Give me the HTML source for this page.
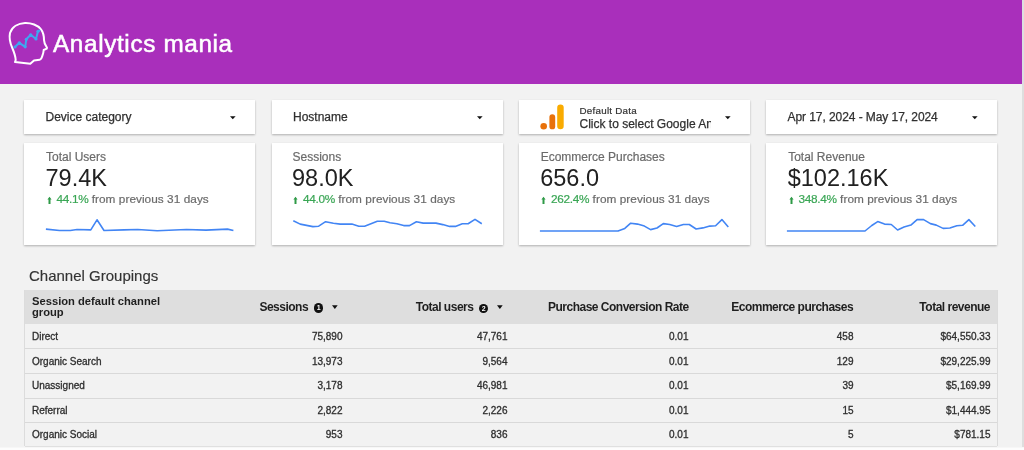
<!DOCTYPE html>
<html><head><meta charset="utf-8">
<style>
*{margin:0;padding:0;box-sizing:border-box}
html,body{width:1024px;height:450px;overflow:hidden;background:#f2f2f2;font-family:"Liberation Sans",sans-serif}
.abs{position:absolute}
#hdr{left:0;top:0;width:1022px;height:84px;background:#a92fbb}
#rbar{left:1022px;top:0;width:2px;height:450px;background:#dedede}
.card{position:absolute;background:#fff;box-shadow:0 1px 2px rgba(0,0,0,.28)}
.dd{top:100px;height:34px}
.sc{top:143px;height:102px}
.t{position:absolute;white-space:nowrap}
.arrow{position:absolute;width:0;height:0;border-left:3.5px solid transparent;border-right:3.5px solid transparent;border-top:4px solid #111}
.dd .arrow{border-left-width:2.8px;border-right-width:2.8px;border-top-width:3.2px}
.ddtxt{font-size:12px;color:#303030;top:10px;-webkit-text-stroke:0.25px #303030}
.sct{font-size:12px;color:#6b6b6b;top:7px;-webkit-text-stroke:0.2px #6b6b6b}
.scv{font-size:23.5px;color:#212121;top:21.5px;margin-left:-0.5px}
.scd{font-size:11.8px;color:#6b6b6b;top:49.3px;letter-spacing:0.05px;-webkit-text-stroke:0.2px #6b6b6b}
.scd b{font-weight:normal;color:#3aa655;letter-spacing:-0.3px;-webkit-text-stroke:0.2px #3aa655}
.spark{position:absolute;left:0;top:0}
#title{left:29px;top:267px;font-size:15px;color:#333;-webkit-text-stroke:0.15px #333}
#tbl{left:24.5px;top:290px;width:972px;height:156px;background:#f2f2f2;box-shadow:-1px 0 0 #dcdcdc,1px 0 0 #dcdcdc,0 1px 0 #e0e0e0}
#bstrip{left:0;top:447px;width:1024px;height:3px;background:#fdfdfd;border-top:1px solid #f7f7f7}
#thead{position:absolute;left:0;top:0;width:972px;height:34px;background:#dedede}
.th{position:absolute;font-weight:bold;font-size:12px;letter-spacing:-0.5px;color:#1f1f1f;white-space:nowrap}
.row{position:absolute;left:0;width:972px;height:24.6px}
.hl{position:absolute;left:0;width:972px;height:1px;background:#d9d9d9}
.td{position:absolute;font-size:10px;color:#2e2e2e;white-space:nowrap;top:7px;-webkit-text-stroke:0.3px #2e2e2e}
.circ{position:absolute;width:9.2px;height:9.4px;border-radius:50%;background:#111;color:#fff;font-size:7px;font-weight:bold;text-align:center;line-height:9.4px}
</style></head><body><div style="position:absolute;left:0;top:0;width:1024px;height:450px;will-change:transform">
<div id="hdr" class="abs">
  <svg class="abs" style="left:0;top:0" width="60" height="85" viewBox="0 0 60 85">
    <path d="M25 23 C31 22.8 38 25 41 29.3 C43.5 32.5 44 36 44 40 C44 42.5 45.5 45.5 47 47.7 L46.7 48.7 L43.7 50 C43.5 52.5 43 54.5 42.3 56 C41.5 58.5 40.5 59.7 39.7 59.7 L34 60.5 L30.3 63.7 L15 62 L15.7 60 C15.5 56 14 52 12.3 48 C10 43 9 38 10 33 C12 27 18 23.3 25 23 Z" fill="none" stroke="#fff" stroke-width="2" stroke-linejoin="round"/>
    <polyline points="15,47 19.3,42.8 25.2,46.8 26.3,39.3 30.7,34.8 36,39 38,31.3 39.5,30.5" fill="none" stroke="#3ea8f0" stroke-width="2" stroke-linejoin="round" stroke-linecap="round"/><circle cx="15" cy="47" r="1.6" fill="#3ea8f0"/><circle cx="19.3" cy="42.8" r="1.6" fill="#3ea8f0"/><circle cx="25.2" cy="46.8" r="1.6" fill="#3ea8f0"/><circle cx="26.3" cy="39.3" r="1.6" fill="#3ea8f0"/><circle cx="30.7" cy="34.8" r="1.6" fill="#3ea8f0"/><circle cx="36" cy="39" r="1.6" fill="#3ea8f0"/><circle cx="38" cy="31.3" r="1.6" fill="#3ea8f0"/>
  </svg>
  <div class="t" id="logo" style="left:52.5px;top:31px;font-size:23px;color:#fff;-webkit-text-stroke:0.5px #fff;letter-spacing:0.6px;transform:scaleX(1.057);transform-origin:0 0">Analytics mania</div>
</div>
<div id="rbar" class="abs"></div>

<!-- dropdowns -->
<div class="card dd" style="left:24px;width:231px">
  <div class="t ddtxt" style="left:21.5px">Device category</div>
  <svg class="abs" style="left:205.8px;top:16.2px" width="6" height="4" viewBox="0 0 6 4"><polygon points="0,0.3 5.6,0.3 2.8,3.2" fill="#111"/></svg>
</div>
<div class="card dd" style="left:271.5px;width:231px">
  <div class="t ddtxt" style="left:21.5px">Hostname</div>
  <svg class="abs" style="left:205.8px;top:16.2px" width="6" height="4" viewBox="0 0 6 4"><polygon points="0,0.3 5.6,0.3 2.8,3.2" fill="#111"/></svg>
</div>
<div class="card dd" style="left:519px;width:231px">
  <svg class="abs" style="left:0;top:0" width="50" height="34">
    <circle cx="24.7" cy="26.3" r="3.3" fill="#e8710a"/>
    <rect x="30.4" y="14.2" width="5.8" height="15.1" rx="2.9" fill="#e8710a"/>
    <rect x="38.2" y="4.4" width="6.5" height="24.9" rx="3.25" fill="#f9ab00"/>
  </svg>
  <div class="t" style="left:60.5px;top:4.6px;font-size:9.8px;letter-spacing:0.25px;color:#333;-webkit-text-stroke:0.2px #333">Default Data</div>
  <div class="t" style="left:60.5px;top:16.6px;font-size:12px;color:#303030;width:131px;overflow:hidden;-webkit-text-stroke:0.25px #303030">Click to select Google Analytics</div>
  <svg class="abs" style="left:205.5px;top:16.2px" width="6" height="4" viewBox="0 0 6 4"><polygon points="0,0.3 5.6,0.3 2.8,3.2" fill="#111"/></svg>
</div>
<div class="card dd" style="left:766px;width:231px">
  <div class="t ddtxt" style="left:21.5px;letter-spacing:-0.07px">Apr 17, 2024 - May 17, 2024</div>
  <svg class="abs" style="left:205.5px;top:16.2px" width="6" height="4" viewBox="0 0 6 4"><polygon points="0,0.3 5.6,0.3 2.8,3.2" fill="#111"/></svg>
</div>

<!-- scorecards -->
<div class="card sc" style="left:24px;width:231px">
  <div class="t sct" style="left:22px">Total Users</div>
  <div class="t scv" style="left:22px">79.4K</div>
  <div class="t scd" style="left:22px"><b><svg width="5" height="8" viewBox="0 0 5 8" style="display:inline-block;vertical-align:-0.8px;margin-right:4.9px;margin-left:0.5px"><path d="M2.5 0.8 L4.6 3.4 L3.5 3.4 L3.5 8 L1.5 8 L1.5 3.4 L0.4 3.4 Z" fill="#2e9a47"/></svg>44.1%</b> from previous 31 days</div>
  <svg class="spark" width="231" height="102" viewBox="24 143 231 102"><polyline fill="none" stroke="#4285f4" stroke-width="1.6" stroke-linejoin="round" points="45.9,229.1 59.5,230.5 70.3,230.5 77.1,229.5 90.8,229.9 97,219.8 104,230.5 124,229.9 137.7,229.5 157.2,230.7 186.5,229.5 206,230.1 227.5,229.1 233.4,230.5"/></svg>
</div>
<div class="card sc" style="left:271.5px;width:231px">
  <div class="t sct" style="left:21px">Sessions</div>
  <div class="t scv" style="left:21px">98.0K</div>
  <div class="t scd" style="left:21px"><b><svg width="5" height="8" viewBox="0 0 5 8" style="display:inline-block;vertical-align:-0.8px;margin-right:4.9px;margin-left:0.5px"><path d="M2.5 0.8 L4.6 3.4 L3.5 3.4 L3.5 8 L1.5 8 L1.5 3.4 L0.4 3.4 Z" fill="#2e9a47"/></svg>44.0%</b> from previous 31 days</div>
  <svg class="spark" width="231" height="102" viewBox="271.5 143 231 102"><polyline fill="none" stroke="#4285f4" stroke-width="1.6" stroke-linejoin="round" points="292.8,220.7 299.7,224.1 312.4,226.6 318.2,226.2 325.1,221.7 332.9,223.3 339.7,224.1 351.4,224.1 358.3,226.2 364.1,226.2 376.8,221.3 383.7,221.3 389.5,222.7 396.4,223.7 403.2,225.6 409,225.6 415.9,221.7 422.7,223.1 435.4,223.1 442.3,224.6 449.1,226.4 454.9,226.4 461.8,223.7 467.6,223.7 474.5,219.4 481.3,223.7"/></svg>
</div>
<div class="card sc" style="left:519px;width:231px">
  <div class="t sct" style="left:21.7px">Ecommerce Purchases</div>
  <div class="t scv" style="left:21.7px">656.0</div>
  <div class="t scd" style="left:21.7px"><b><svg width="5" height="8" viewBox="0 0 5 8" style="display:inline-block;vertical-align:-0.8px;margin-right:4.9px;margin-left:0.5px"><path d="M2.5 0.8 L4.6 3.4 L3.5 3.4 L3.5 8 L1.5 8 L1.5 3.4 L0.4 3.4 Z" fill="#2e9a47"/></svg>262.4%</b> from previous 31 days</div>
  <svg class="spark" width="231" height="102" viewBox="519 143 231 102"><polyline fill="none" stroke="#4285f4" stroke-width="1.6" stroke-linejoin="round" points="539.9,231 618,231 624.8,228.4 630.7,223.2 637.5,224.1 644.4,226.1 650.6,229.6 657,228 663.3,223.6 669.7,224.5 676.6,226.5 683.4,224.5 689.3,224.5 696.1,229 702.9,227.9 709.8,226.1 715.6,225.7 721.9,219.6 728.3,227.1"/></svg>
</div>
<div class="card sc" style="left:766px;width:231px">
  <div class="t sct" style="left:22.2px">Total Revenue</div>
  <div class="t scv" style="left:22.2px">$102.16K</div>
  <div class="t scd" style="left:22.2px"><b><svg width="5" height="8" viewBox="0 0 5 8" style="display:inline-block;vertical-align:-0.8px;margin-right:4.9px;margin-left:0.5px"><path d="M2.5 0.8 L4.6 3.4 L3.5 3.4 L3.5 8 L1.5 8 L1.5 3.4 L0.4 3.4 Z" fill="#2e9a47"/></svg>348.4%</b> from previous 31 days</div>
  <svg class="spark" width="231" height="102" viewBox="766 143 231 102"><polyline fill="none" stroke="#4285f4" stroke-width="1.6" stroke-linejoin="round" points="786.9,231 865,231 871.8,225.5 877.7,221.6 884.5,224.1 891.3,224.5 897.6,230 904,227.1 910.9,225.1 917.1,219.6 923.6,219.6 930.4,223.6 936.3,225.1 943.1,228.4 949.9,228 956.8,225.7 962.6,225.3 968.9,219.6 975.3,226.5"/></svg>
</div>

<div class="t" id="title">Channel Groupings</div>

<div id="tbl" class="abs">
  <div id="thead">
    <div class="th" style="left:7.5px;top:6px;line-height:11px;font-size:11.2px;letter-spacing:0">Session default channel<br>group</div>
    <div class="th" style="right:688.4px;top:9.6px">Sessions</div>
    <div class="circ" style="left:289.5px;top:13.2px">1</div>
    <svg class="abs" style="left:307.4px;top:14.6px" width="6" height="4.5" viewBox="0 0 6 4.5"><polygon points="0,0.2 5.7,0.2 2.85,3.9" fill="#111"/></svg>
    <div class="th" style="right:523.1px;top:9.6px">Total users</div>
    <div class="circ" style="left:454.6px;top:13.5px">2</div>
    <svg class="abs" style="left:472.7px;top:14.6px" width="6" height="4.5" viewBox="0 0 6 4.5"><polygon points="0,0.2 5.7,0.2 2.85,3.9" fill="#111"/></svg>
    <div class="th" style="right:307.8px;top:9.6px">Purchase Conversion Rate</div>
    <div class="th" style="right:143.4px;top:9.6px">Ecommerce purchases</div>
    <div class="th" style="right:6.5px;top:9.6px">Total revenue</div>
  </div>
  <div class="row" style="top:34.0px;">
    <div class="td" style="left:7.5px">Direct</div>
    <div class="td" style="right:654px">75,890</div>
    <div class="td" style="right:489px">47,761</div>
    <div class="td" style="right:308px">0.01</div>
    <div class="td" style="right:143px">458</div>
    <div class="td" style="right:6px">$64,550.33</div>
  </div>
  <div class="row" style="top:58.6px;">
    <div class="td" style="left:7.5px">Organic Search</div>
    <div class="td" style="right:654px">13,973</div>
    <div class="td" style="right:489px">9,564</div>
    <div class="td" style="right:308px">0.01</div>
    <div class="td" style="right:143px">129</div>
    <div class="td" style="right:6px">$29,225.99</div>
  </div>
  <div class="row" style="top:83.2px;">
    <div class="td" style="left:7.5px">Unassigned</div>
    <div class="td" style="right:654px">3,178</div>
    <div class="td" style="right:489px">46,981</div>
    <div class="td" style="right:308px">0.01</div>
    <div class="td" style="right:143px">39</div>
    <div class="td" style="right:6px">$5,169.99</div>
  </div>
  <div class="row" style="top:107.8px;">
    <div class="td" style="left:7.5px">Referral</div>
    <div class="td" style="right:654px">2,822</div>
    <div class="td" style="right:489px">2,226</div>
    <div class="td" style="right:308px">0.01</div>
    <div class="td" style="right:143px">15</div>
    <div class="td" style="right:6px">$1,444.95</div>
  </div>
  <div class="row" style="top:132.4px;border-bottom:none;">
    <div class="td" style="left:7.5px">Organic Social</div>
    <div class="td" style="right:654px">953</div>
    <div class="td" style="right:489px">836</div>
    <div class="td" style="right:308px">0.01</div>
    <div class="td" style="right:143px">5</div>
    <div class="td" style="right:6px">$781.15</div>
  </div>
  <div class="hl" style="top:58px"></div>
  <div class="hl" style="top:83px"></div>
  <div class="hl" style="top:108px"></div>
  <div class="hl" style="top:132px"></div>
</div>
<div id="bstrip" class="abs"></div>
</div></body></html>
